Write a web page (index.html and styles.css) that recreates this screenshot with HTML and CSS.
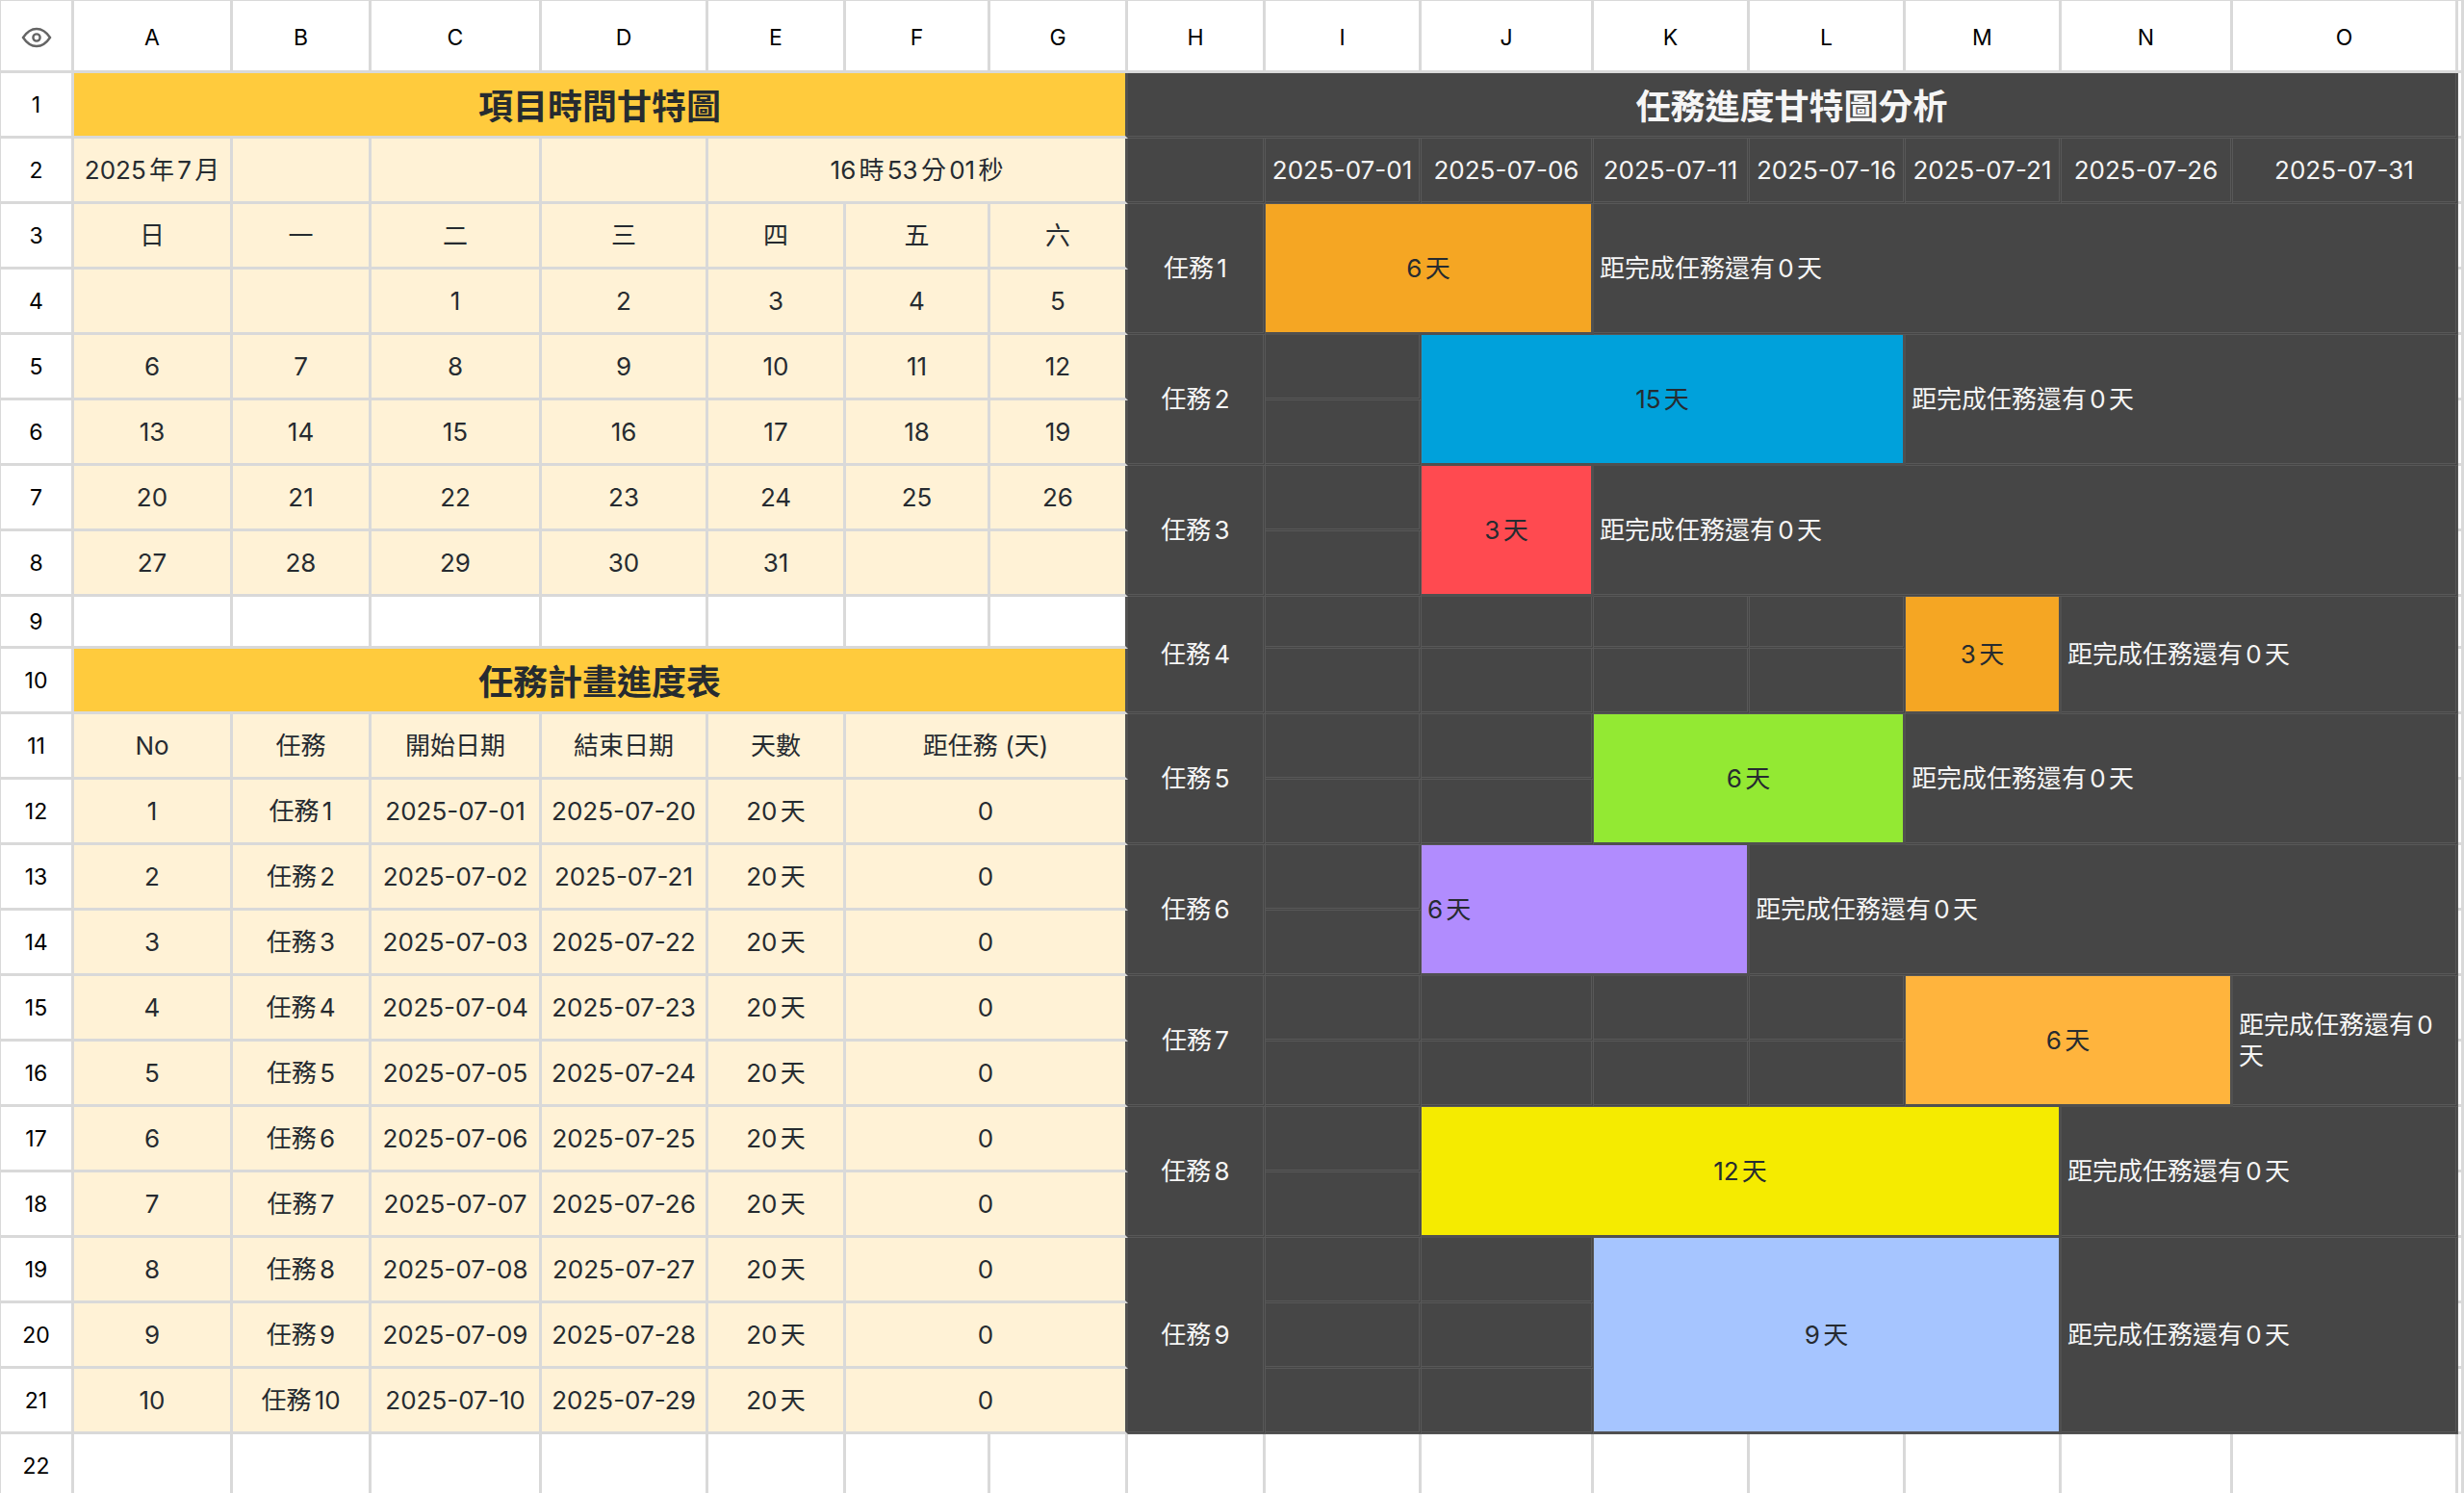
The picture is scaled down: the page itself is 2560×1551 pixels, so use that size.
FILE: index.html
```html
<!DOCTYPE html>
<html lang="zh-Hant">
<head>
<meta charset="utf-8">
<title>項目時間甘特圖</title>
<link rel="stylesheet" href="styles.css">
</head>
<body>
<table class="sheet">
<colgroup>
<col class="c-rownum"><col class="c-a"><col class="c-b"><col class="c-c"><col class="c-d"><col class="c-e"><col class="c-f"><col class="c-g"><col class="c-h"><col class="c-i"><col class="c-j"><col class="c-k"><col class="c-l"><col class="c-m"><col class="c-n"><col class="c-o"><col class="c-p">
</colgroup>
<thead>
<tr class="letters"><th><svg class="eye" viewBox="0 0 32 22" role="img" aria-label="顯示"><path d="M2 11C6 5 10 2 16 2s10 3 14 9c-4 6-8 9-14 9S6 17 2 11Z"/><circle cx="16" cy="11" r="3.6"/></svg></th><th>A</th><th>B</th><th>C</th><th>D</th><th>E</th><th>F</th><th>G</th><th>H</th><th>I</th><th>J</th><th>K</th><th>L</th><th>M</th><th>N</th><th>O</th><th></th></tr>
</thead>
<tbody class="plan">
<tr><th>1</th><td class="title edge" colspan="7">項目時間甘特圖</td><td class="dark title" colspan="8">任務進度甘特圖分析</td><td></td></tr>
<tr><th>2</th><td class="cream">2025年7月</td><td class="cream"></td><td class="cream"></td><td class="cream"></td><td class="cream edge" colspan="3">16時53分01秒</td><td class="dark"></td><td class="dark">2025-07-01</td><td class="dark">2025-07-06</td><td class="dark">2025-07-11</td><td class="dark">2025-07-16</td><td class="dark">2025-07-21</td><td class="dark">2025-07-26</td><td class="dark">2025-07-31</td><td></td></tr>
<tr><th>3</th><td class="cream">日</td><td class="cream">一</td><td class="cream">二</td><td class="cream">三</td><td class="cream">四</td><td class="cream">五</td><td class="cream edge">六</td><td class="dark" rowspan="2">任務1</td><td class="bar orange" rowspan="2" colspan="2">6天</td><td class="dark note" rowspan="2" colspan="5">距完成任務還有0天</td><td></td></tr>
<tr><th>4</th><td class="cream"></td><td class="cream"></td><td class="cream">1</td><td class="cream">2</td><td class="cream">3</td><td class="cream">4</td><td class="cream edge">5</td><td></td></tr>
<tr><th>5</th><td class="cream">6</td><td class="cream">7</td><td class="cream">8</td><td class="cream">9</td><td class="cream">10</td><td class="cream">11</td><td class="cream edge">12</td><td class="dark" rowspan="2">任務2</td><td class="dark"></td><td class="bar blue" rowspan="2" colspan="3">15天</td><td class="dark note" rowspan="2" colspan="3">距完成任務還有0天</td><td></td></tr>
<tr><th>6</th><td class="cream">13</td><td class="cream">14</td><td class="cream">15</td><td class="cream">16</td><td class="cream">17</td><td class="cream">18</td><td class="cream edge">19</td><td class="dark"></td><td></td></tr>
<tr><th>7</th><td class="cream">20</td><td class="cream">21</td><td class="cream">22</td><td class="cream">23</td><td class="cream">24</td><td class="cream">25</td><td class="cream edge">26</td><td class="dark" rowspan="2">任務3</td><td class="dark"></td><td class="bar red" rowspan="2">3天</td><td class="dark note" rowspan="2" colspan="5">距完成任務還有0天</td><td></td></tr>
<tr><th>8</th><td class="cream">27</td><td class="cream">28</td><td class="cream">29</td><td class="cream">30</td><td class="cream">31</td><td class="cream"></td><td class="cream edge"></td><td class="dark"></td><td></td></tr>
<tr class="short"><th>9</th><td></td><td></td><td></td><td></td><td></td><td></td><td class="edge"></td><td class="dark" rowspan="2">任務4</td><td class="dark"></td><td class="dark"></td><td class="dark"></td><td class="dark"></td><td class="bar orange" rowspan="2">3天</td><td class="dark note" rowspan="2" colspan="2">距完成任務還有0天</td><td></td></tr>
<tr><th>10</th><td class="title edge" colspan="7">任務計畫進度表</td><td class="dark"></td><td class="dark"></td><td class="dark"></td><td class="dark"></td><td></td></tr>
<tr><th>11</th><td class="cream">No</td><td class="cream">任務</td><td class="cream">開始日期</td><td class="cream">結束日期</td><td class="cream">天數</td><td class="cream edge" colspan="2">距任務 (天)</td><td class="dark" rowspan="2">任務5</td><td class="dark"></td><td class="dark"></td><td class="bar green" rowspan="2" colspan="2">6天</td><td class="dark note" rowspan="2" colspan="3">距完成任務還有0天</td><td></td></tr>
<tr><th>12</th><td class="cream">1</td><td class="cream">任務1</td><td class="cream">2025-07-01</td><td class="cream">2025-07-20</td><td class="cream">20天</td><td class="cream edge" colspan="2">0</td><td class="dark"></td><td class="dark"></td><td></td></tr>
<tr><th>13</th><td class="cream">2</td><td class="cream">任務2</td><td class="cream">2025-07-02</td><td class="cream">2025-07-21</td><td class="cream">20天</td><td class="cream edge" colspan="2">0</td><td class="dark" rowspan="2">任務6</td><td class="dark"></td><td class="bar purple start" rowspan="2" colspan="2">6天</td><td class="dark note" rowspan="2" colspan="4">距完成任務還有0天</td><td></td></tr>
<tr><th>14</th><td class="cream">3</td><td class="cream">任務3</td><td class="cream">2025-07-03</td><td class="cream">2025-07-22</td><td class="cream">20天</td><td class="cream edge" colspan="2">0</td><td class="dark"></td><td></td></tr>
<tr><th>15</th><td class="cream">4</td><td class="cream">任務4</td><td class="cream">2025-07-04</td><td class="cream">2025-07-23</td><td class="cream">20天</td><td class="cream edge" colspan="2">0</td><td class="dark" rowspan="2">任務7</td><td class="dark"></td><td class="dark"></td><td class="dark"></td><td class="dark"></td><td class="bar amber" rowspan="2" colspan="2">6天</td><td class="dark note" rowspan="2">距完成任務還有0天</td><td></td></tr>
<tr><th>16</th><td class="cream">5</td><td class="cream">任務5</td><td class="cream">2025-07-05</td><td class="cream">2025-07-24</td><td class="cream">20天</td><td class="cream edge" colspan="2">0</td><td class="dark"></td><td class="dark"></td><td class="dark"></td><td class="dark"></td><td></td></tr>
<tr><th>17</th><td class="cream">6</td><td class="cream">任務6</td><td class="cream">2025-07-06</td><td class="cream">2025-07-25</td><td class="cream">20天</td><td class="cream edge" colspan="2">0</td><td class="dark" rowspan="2">任務8</td><td class="dark"></td><td class="bar yellow" rowspan="2" colspan="4">12天</td><td class="dark note" rowspan="2" colspan="2">距完成任務還有0天</td><td></td></tr>
<tr><th>18</th><td class="cream">7</td><td class="cream">任務7</td><td class="cream">2025-07-07</td><td class="cream">2025-07-26</td><td class="cream">20天</td><td class="cream edge" colspan="2">0</td><td class="dark"></td><td></td></tr>
<tr><th>19</th><td class="cream">8</td><td class="cream">任務8</td><td class="cream">2025-07-08</td><td class="cream">2025-07-27</td><td class="cream">20天</td><td class="cream edge" colspan="2">0</td><td class="dark" rowspan="3">任務9</td><td class="dark"></td><td class="dark"></td><td class="bar sky" rowspan="3" colspan="3">9天</td><td class="dark note" rowspan="3" colspan="2">距完成任務還有0天</td><td></td></tr>
<tr><th>20</th><td class="cream">9</td><td class="cream">任務9</td><td class="cream">2025-07-09</td><td class="cream">2025-07-28</td><td class="cream">20天</td><td class="cream edge" colspan="2">0</td><td class="dark"></td><td class="dark"></td><td></td></tr>
<tr><th>21</th><td class="cream">10</td><td class="cream">任務10</td><td class="cream">2025-07-10</td><td class="cream">2025-07-29</td><td class="cream">20天</td><td class="cream edge" colspan="2">0</td><td class="dark"></td><td class="dark"></td><td></td></tr>
<tr><th>22</th><td></td><td></td><td></td><td></td><td></td><td></td><td></td><td></td><td></td><td></td><td></td><td></td><td></td><td></td><td></td><td></td></tr>
</tbody>
</table>
</body>
</html>
```
FILE: styles.css
```css
:root {
  --line: #d9d9d9;
  --dark: #464646;
  --dark-line: #505050;
  --dark-rule: #585858;
}

body {
  margin: 0;
  background: #fff;
  color: #262b30;
  font-family: Inter, "Noto Sans CJK TC", sans-serif;
  font-size: 26px;
  line-height: 32px;
  text-autospace: normal;
}

.sheet {
  width: 100%;
  table-layout: fixed;
  border-collapse: separate;
  border-spacing: 0;
  border-top: 1px solid var(--line);
}

.c-rownum { width: 77px; }
.c-a { width: 165px; }
.c-b { width: 144px; }
.c-c { width: 177px; }
.c-d { width: 173px; }
.c-e { width: 143px; }
.c-f { width: 150px; }
.c-g { width: 143px; }
.c-h { width: 143px; }
.c-i { width: 162px; }
.c-j { width: 179px; }
.c-k { width: 162px; }
.c-l { width: 162px; }
.c-m { width: 162px; }
.c-n { width: 178px; }
.c-o { width: 234px; }
.c-p { width: 6px; }

.sheet th,
.sheet td {
  box-sizing: border-box;
  height: 68px;
  padding: 0;
  border: 0 solid var(--line);
  border-width: 0 3px 3px 0;
  text-align: center;
  vertical-align: middle;
  white-space: nowrap;
  overflow: hidden;
}

.sheet th {
  color: #000;
  font-size: 23px;
  font-weight: 400;
}

.sheet th:first-child {
  border-left: 1px solid var(--line);
}

.sheet .letters th {
  height: 75px;
  padding-top: 4px;
}

.sheet .short th,
.sheet .short td {
  height: 54px;
}

.eye {
  display: block;
  width: 32px;
  height: 22px;
  margin: 0 auto;
  fill: none;
  stroke: #646464;
  stroke-width: 2.4;
}

.sheet .cream { background: #fff2d6; }

.sheet .title {
  padding-top: 4px;
  background: #ffcb3d;
  font-size: 36px;
  line-height: 48px;
  font-weight: 600;
}

.sheet .dark {
  background: var(--dark);
  border-style: double;
  border-color: var(--dark-rule);
  color: #f5f5f5;
}

.sheet .edge { border-right-color: var(--dark-line); }

.sheet .note {
  padding: 0 6px;
  text-align: left;
  white-space: normal;
}

.sheet .bar { border-color: var(--dark-line); }

.sheet .start {
  padding-left: 6px;
  text-align: left;
}

.sheet .orange { background: #f5a623; }
.sheet .blue { background: #00a1db; }
.sheet .red { background: #ff4a50; }
.sheet .green { background: #93e933; }
.sheet .purple { background: #b18cfe; }
.sheet .amber { background: #ffb43d; }
.sheet .yellow { background: #f5eb00; }
.sheet .sky { background: #a6c5ff; }
```
